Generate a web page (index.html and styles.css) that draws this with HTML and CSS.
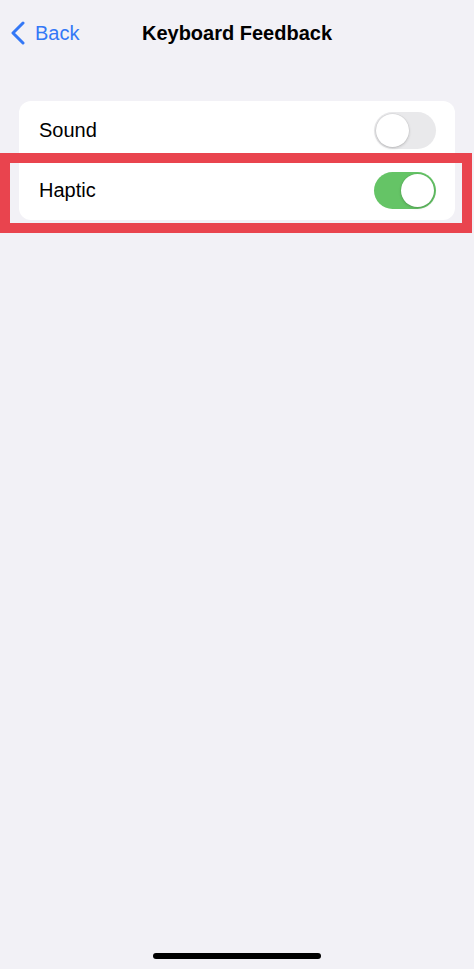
FILE: index.html
```html
<!DOCTYPE html>
<html>
<head>
<meta charset="utf-8">
<link rel="stylesheet" href="styles.css">
</head>
<body>
<div class="screen">
  <header class="nav">
    <div class="back">
      <svg class="chev" width="16" height="24" viewBox="0 0 16 24"><polyline points="13,2 3,12 13,22" fill="none" stroke="#3478f6" stroke-width="3" stroke-linecap="round" stroke-linejoin="round"/></svg>
      <span class="back-text">Back</span>
    </div>
    <div class="title">Keyboard Feedback</div>
  </header>
  <div class="card">
    <div class="row">
      <span class="label">Sound</span>
      <span class="toggle off"><span class="knob"></span></span>
    </div>
    <div class="row">
      <span class="label">Haptic</span>
      <span class="toggle on"><span class="knob"></span></span>
    </div>
    <div class="highlight"></div>
  </div>
  <div class="spacer"></div>
  <div class="home-bar"></div>
</div>
</body>
</html>
```
FILE: styles.css
```css
html, body {
  margin: 0;
  padding: 0;
  background: #f2f1f6;
  font-family: "Liberation Sans", Arial, sans-serif;
}
.screen {
  width: 474px;
  height: 969px;
  display: flex;
  flex-direction: column;
  overflow: hidden;
}
.nav {
  position: relative;
  height: 66px;
  display: flex;
  align-items: center;
  justify-content: center;
}
.back {
  position: absolute;
  left: 10px;
  top: 21px;
  display: flex;
  align-items: center;
  gap: 9px;
}
.back-text {
  color: #3478f6;
  font-size: 20px;
}
.title {
  font-size: 20px;
  font-weight: bold;
  color: #000;
}
.card {
  position: relative;
  margin: 35px 19px 0 19px;
  background: #fff;
  border-radius: 12px;
}
.row {
  height: 59px;
  display: flex;
  align-items: center;
  justify-content: space-between;
  padding: 0 19px 0 20px;
}
.row + .row { height: 60px; }
.label {
  font-size: 20px;
  color: #000;
}
.toggle {
  width: 62px;
  height: 37px;
  border-radius: 19px;
  position: relative;
  box-sizing: border-box;
}
.toggle.off { background: #e9e9eb; }
.toggle.on { background: #65c466; }
.knob {
  position: absolute;
  top: 2px;
  width: 33px;
  height: 33px;
  border-radius: 50%;
  background: #fff;
  box-shadow: 0 1px 3px rgba(0,0,0,0.2), 0 0 0 0.5px rgba(0,0,0,0.06);
}
.off .knob { left: 2px; }
.on .knob { right: 2px; }
.highlight {
  position: absolute;
  left: -19px;
  top: 52px;
  width: 472px;
  height: 80px;
  box-sizing: border-box;
  border: 10px solid #e9444e;
}
.spacer { flex: 1; }
.home-bar {
  align-self: center;
  width: 168px;
  height: 6px;
  border-radius: 3px;
  background: #000;
  margin-bottom: 10px;
}
```
